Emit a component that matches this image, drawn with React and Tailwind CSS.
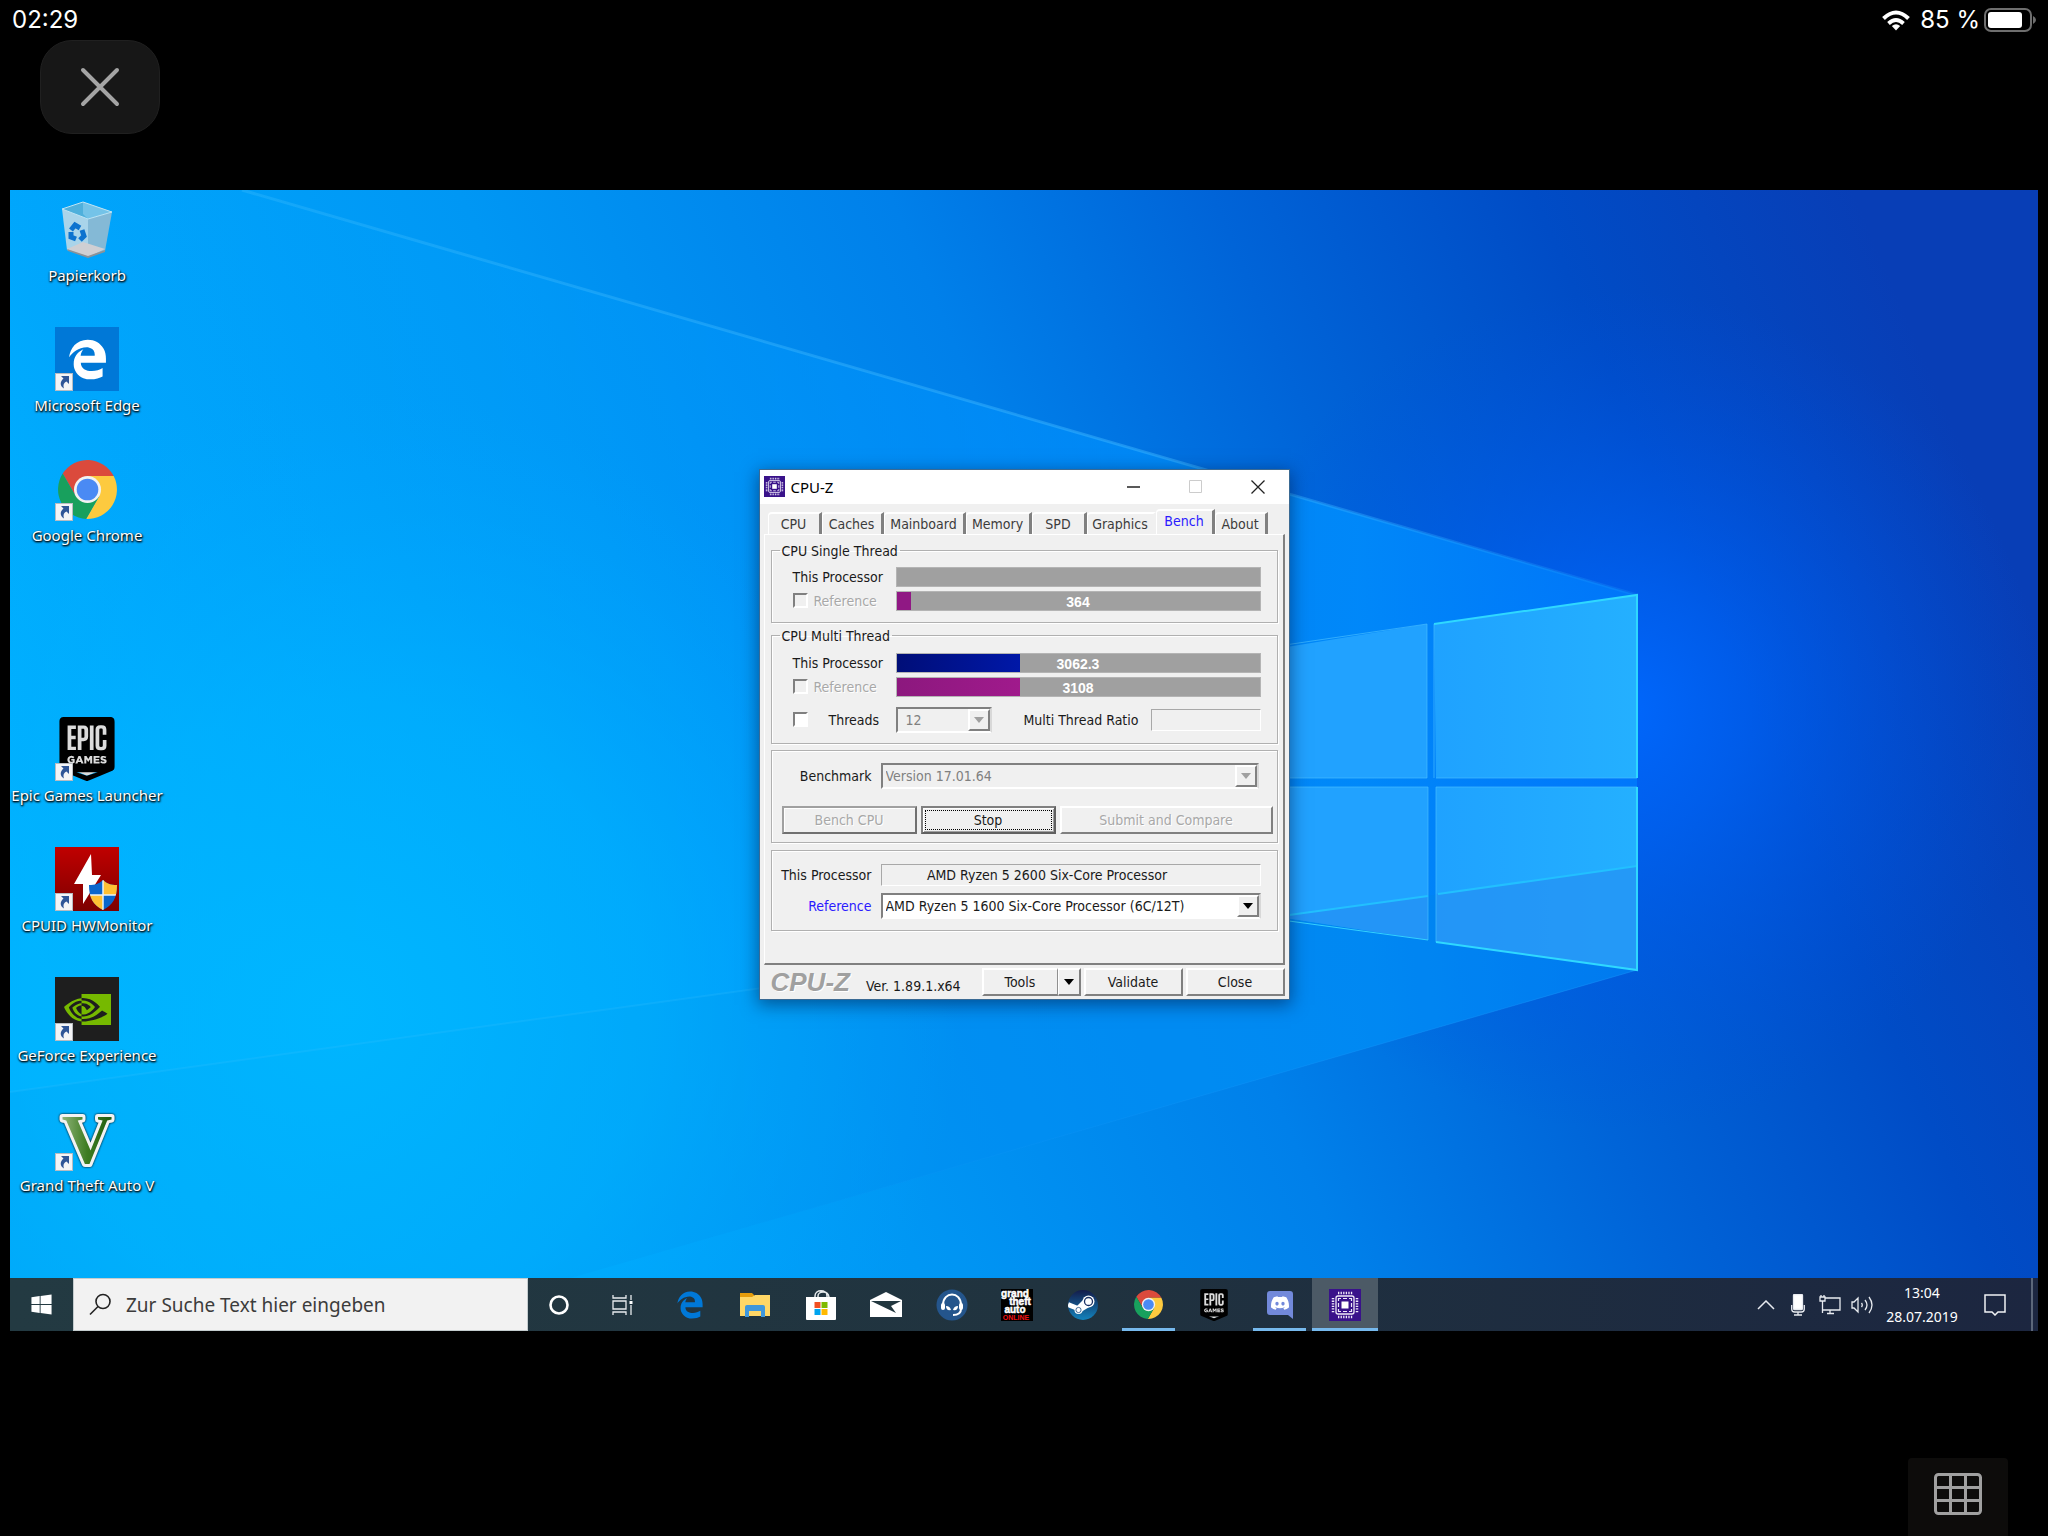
import React, { useState } from 'react';
import { FaEdgeLegacy, FaWindows } from 'react-icons/fa6';
import { SiDiscord, SiEpicgames, SiNvidia } from 'react-icons/si';

const tabs = [
  { name: 'CPU', width: 'w-[54px]' },
  { name: 'Caches', width: 'w-[62px]' },
  { name: 'Mainboard', width: 'w-[82px]' },
  { name: 'Memory', width: 'w-[66px]' },
  { name: 'SPD', width: 'w-[55px]' },
  { name: 'Graphics', width: 'w-[69px]' },
  { name: 'Bench', width: 'w-[59px]' },
  { name: 'About', width: 'w-[53px]' },
];

/* ---------- Icons ---------- */

const Chrome = ({ size }) => (
  <svg width={size} height={size} viewBox="0 0 48 48">
    <path d="M3.82 11.05A24 24 0 0 1 45.3 13H24l-9.53 16.5z" fill="#db4a3c" />
    <path d="M45.3 13a24 24 0 0 1-22.42 34.95L33.53 29.5 24 13z" fill="#fdca3f" />
    <path d="M22.88 47.95A24 24 0 0 1 3.82 11.05L14.47 29.5h19.06z" fill="#18a05d" />
    <circle cx="24" cy="24" r="11" fill="#f2f2f2" />
    <circle cx="24" cy="24" r="8.8" fill="#4a8af4" />
  </svg>
);

const Epic = ({ size }) => (
  <svg width={size} height={size} viewBox="0 0 24 24">
    <path d="M3.5 1.5h17v17L12 22l-8.500-3.500z" fill="#dcdcdc" />
    <SiEpicgames size={24} color="#000" />
  </svg>
);

const Chip = ({ size }) => (
  <svg width={size} height={size} viewBox="0 0 32 32" fill="none" stroke="#efeaf8">
    <rect width="32" height="32" fill="#39128a" stroke="none" />
    <path d="M9 4h14.200M9 28h14.200" strokeWidth="2.500" strokeDasharray="1.300 1.280" />
    <path d="M4 9v14.200M28 9v14.200" strokeWidth="2.500" strokeDasharray="1.300 1.280" />
    <rect x="7" y="7" width="18" height="18" rx="2" strokeWidth="1.300" />
    <rect x="12.500" y="12.500" width="7" height="7" fill="#fff" stroke="none" />
    <path d="M9.500 12v-2.500H12M20 9.500h2.500V12M22.500 20v2.500H20M12 22.500H9.500V20M14 9.500h4M14 22.500h4M9.500 14v4M22.500 14v4" strokeWidth="1.200" />
  </svg>
);

const RecycleBin = () => (
  <svg width="64" height="64" viewBox="0 0 64 64">
    <g transform="translate(0 2)">
      <path d="M7 10 28 3l29 10-24 7z" fill="#4fb0dc" />
      <path d="M28 3v12l5 5 24-7z" fill="#74c3e8" />
      <path d="m7 10 26 10v38l-21-7z" fill="#a9d4ea" />
      <path d="m33 20 24-7-7 39-17 6z" fill="#84b9d6" />
      <path d="m12 50 16-7 22 7-17 8z" fill="#cfcfd3" />
      <path d="m12 50 21 7 17-6v2l-17 6-20-7z" fill="#8b9298" />
      <path d="M7 10 28 3l29 10-24 7z" fill="none" stroke="#bfe4f4" />
      <g fill="none" stroke="#0d73cf" strokeWidth="5">
        <path d="m16 31 4-5 5 3" />
        <path d="m27 31 2 6-4 4" />
        <path d="m21 40-5-2v-5" />
      </g>
    </g>
  </svg>
);

const EdgeTile = () => (
  <span className="flex size-16 items-center justify-center bg-[#0078d7]">
    <FaEdgeLegacy size={41} color="#fff" />
  </span>
);

const HwMonitor = () => (
  <svg width="64" height="64" viewBox="0 0 64 64">
    <defs>
      <linearGradient id="hw" x2="0" y2="1">
        <stop stopColor="#c00000" />
        <stop offset="1" stopColor="#7d0000" />
      </linearGradient>
      <clipPath id="uac">
        <path d="M48 33c4 4 8 5 14 5 0 13-4 20-14 25-10-5-14-12-14-25 6 0 10-1 14-5z" />
      </clipPath>
    </defs>
    <rect width="64" height="64" fill="url(#hw)" />
    <path d="M36 7 19 37h9v20l18-29h-9z" fill="#fff" />
    <g clipPath="url(#uac)">
      <rect x="33" y="32" width="30" height="32" fill="#0a66cc" />
      <path d="M48 32h16v16H48zM32 48h16v16H32z" fill="#ffc033" />
      <path d="M48 32v32M33 48h30" stroke="#e8f2fa" strokeWidth="1.500" />
    </g>
  </svg>
);

const GeForce = () => (
  <span className="flex size-16 items-center justify-center bg-[#1e1e1e]">
    <SiNvidia size={47} color="#76b900" />
  </span>
);

const GtaV = () => (
  <svg width="64" height="64" viewBox="0 0 64 64" className="overflow-visible drop-shadow-[0_0_1px_#000]">
    <defs>
      <linearGradient id="gta">
        <stop stopColor="#8fb47a" />
        <stop offset="0.500" stopColor="#3e7c22" />
        <stop offset="1" stopColor="#1f5c10" />
      </linearGradient>
    </defs>
    <text
      x="32"
      y="56"
      fontFamily="Liberation Serif, serif"
      fontWeight="700"
      fontSize="70"
      textAnchor="middle"
      fill="url(#gta)"
      stroke="#f3f3f3"
      strokeWidth="6"
      strokeLinejoin="round"
      paintOrder="stroke"
    >
      V
    </text>
  </svg>
);

const ShortcutArrow = () => (
  <svg className="absolute bottom-0 left-0" width="18" height="18" viewBox="0 0 18 18">
    <rect width="18" height="18" fill="#b8bcc2" />
    <rect x="1" y="1" width="16" height="16" fill="#f4f4f6" />
    <path d="M6 3h8v8l-2.500-2.500C8.500 10 8 12 9 15.500 5 13 4.500 9 8.500 5.500z" fill="#2f5597" />
  </svg>
);

const Folder = () => (
  <svg width="30" height="26" viewBox="0 0 30 26">
    <path d="M0 1h12l2 2v4H0z" fill="#e59c0b" />
    <path d="M0 5h12l3-2h15v21H0z" fill="#ffd766" />
    <path d="M5 25V15q0-2 2-2h16q2 0 2 2v10h-4v-6H9v6z" fill="#3f97db" />
  </svg>
);

const Store = () => (
  <svg width="32" height="32" viewBox="0 0 32 32">
    <path d="M10 10V7c0-7 12-7 12 0v3M13 10V7c0-5 10-6 11 1" fill="none" stroke="#e6eaec" strokeWidth="1.500" />
    <path d="M1 8h30v22q0 1-1 1H2q-1 0-1-1z" fill="#fff" />
    <path d="M9.500 13h6v6h-6z" fill="#f25022" />
    <path d="M16.500 13h6v6h-6z" fill="#7fba00" />
    <path d="M9.500 20h6v6h-6z" fill="#00a4ef" />
    <path d="M16.500 20h6v6h-6z" fill="#ffb900" />
  </svg>
);

const Mail = () => (
  <svg width="32" height="26" viewBox="0 0 32 26">
    <path d="M0 8 16 0l16 8v17H0z" fill="#fff" />
    <path d="M1 9h30l-10 5 5 7L1 9z" fill="#22373f" />
  </svg>
);

const TeamSpeak = () => (
  <svg width="32" height="32" viewBox="0 0 32 32">
    <circle cx="16" cy="16" r="15.500" fill="#24558c" />
    <path d="M7 16C7 2 25 2 25 16" fill="none" stroke="#fff" strokeWidth="2" />
    <rect x="5" y="14" width="4" height="7" rx="2" fill="#fff" />
    <rect x="23" y="14" width="4" height="7" rx="2" fill="#fff" />
    <path d="M10 17q4 0 5 4-5 1-5-4zM22 17q-4 0-5 4 5 1 5-4z" fill="#fff" />
    <path d="M25 20c0 4-3 6-8 6" fill="none" stroke="#fff" strokeWidth="2" />
  </svg>
);

const GtaOnline = () => (
  <svg width="32" height="32" viewBox="0 0 32 32" fontFamily="Liberation Sans, sans-serif" fontWeight="700" textAnchor="middle">
    <rect width="32" height="32" fill="#000" />
    <g fill="#fff" stroke="#fff" strokeWidth="0.500" fontSize="10">
      <text x="14" y="8">grand</text>
      <text x="19" y="16">theft</text>
      <text x="14" y="24">auto</text>
    </g>
    <text x="15" y="31" fill="#f01010" fontSize="7">ONLINE</text>
  </svg>
);

const Steam = () => (
  <svg width="30" height="30" viewBox="0 0 30 30">
    <defs>
      <linearGradient id="steam" x2="0" y2="1">
        <stop stopColor="#141c4a" />
        <stop offset="1" stopColor="#1383bd" />
      </linearGradient>
      <clipPath id="disc"><circle cx="15" cy="15" r="15" /></clipPath>
    </defs>
    <g clipPath="url(#disc)">
      <rect width="30" height="30" fill="url(#steam)" />
      <path d="M0 14.500 11 19" stroke="#fff" strokeWidth="5" />
      <path d="m9 16 7-7 7 7-10 6z" fill="#fff" />
      <circle cx="10.500" cy="20" r="4" fill="#fff" />
      <circle cx="10.500" cy="20" r="2.600" fill="none" stroke="#1b4a80" strokeWidth="0.800" />
      <circle cx="20.500" cy="11.500" r="6" fill="#fff" />
      <circle cx="20.500" cy="11.500" r="4" fill="none" stroke="#1a2f62" strokeWidth="1.300" />
    </g>
  </svg>
);

const Discord = () => (
  <svg width="26" height="28" viewBox="0 0 26 28">
    <path d="M3 0h20q3 0 3 3v25l-5-4H3q-3 0-3-3V3q0-3 3-3z" fill="#7289da" />
    <svg x="4" y="3" width="18" height="18" viewBox="0 0 24 24">
      <SiDiscord size={24} color="#fff" />
    </svg>
  </svg>
);

/* ---------- Wallpaper ---------- */

// viewBox is the remote screen, 2028 x 1141, the taskbar covers its lower end
const Wallpaper = () => (
  <svg className="absolute inset-0 size-full" viewBox="0 0 2028 1141" preserveAspectRatio="xMidYMin slice" aria-hidden="true">
    <defs>
      <linearGradient id="sky" y1="0.620" x2="1" y2="0.380">
        <stop stopColor="#00b4ff" />
        <stop offset="0.150" stopColor="#00a5fc" />
        <stop offset="0.350" stopColor="#0097f4" />
        <stop offset="0.550" stopColor="#0080ea" />
        <stop offset="0.700" stopColor="#0064d8" />
        <stop offset="0.850" stopColor="#004cc6" />
        <stop offset="1" stopColor="#083eb6" />
      </linearGradient>
      <radialGradient id="cyan" gradientUnits="userSpaceOnUse" cx="330" cy="820" r="620">
        <stop stopColor="#00b8ff" stopOpacity="0.900" />
        <stop offset="0.500" stopColor="#00b4ff" stopOpacity="0.600" />
        <stop offset="1" stopColor="#00a8ff" stopOpacity="0" />
      </radialGradient>
      <radialGradient id="glow" gradientUnits="userSpaceOnUse" cx="1610" cy="520" r="420">
        <stop stopColor="#0068ff" stopOpacity="0.950" />
        <stop offset="0.300" stopColor="#0062f8" stopOpacity="0.700" />
        <stop offset="1" stopColor="#0050e0" stopOpacity="0" />
      </radialGradient>
      <linearGradient id="beam" gradientUnits="userSpaceOnUse" x1="230" x2="1627">
        <stop stopColor="#00a8ff" stopOpacity="0.100" />
        <stop offset="0.500" stopColor="#0094ff" stopOpacity="0.500" />
        <stop offset="0.800" stopColor="#008cfc" stopOpacity="0.900" />
        <stop offset="1" stopColor="#0080ff" stopOpacity="0.700" />
      </linearGradient>
      <linearGradient id="pane" x2="1">
        <stop stopColor="#1fa2ff" />
        <stop offset="1" stopColor="#24b0ff" />
      </linearGradient>
      <linearGradient id="ray" gradientUnits="userSpaceOnUse" x1="230" x2="1627">
        <stop stopColor="#4cc4ff" stopOpacity="0.250" />
        <stop offset="0.700" stopColor="#3cb4ff" stopOpacity="0.500" />
        <stop offset="1" stopColor="#20a0ff" stopOpacity="0.200" />
      </linearGradient>
      <linearGradient id="lowRay" gradientUnits="userSpaceOnUse" x1="700" x2="1627">
        <stop stopColor="#20a0ff" stopOpacity="0" />
        <stop offset="1" stopColor="#20a0ff" stopOpacity="0.350" />
      </linearGradient>
    </defs>
    <rect width="2028" height="1141" fill="url(#sky)" />
    <rect width="2028" height="1141" fill="url(#glow)" />
    <path d="M0 0h232l1395 405v375L377 1141H0z" fill="url(#beam)" />
    <path d="m0 902 1279-177 348-48v103L377 1141H0z" fill="#0088e0" fillOpacity="0.250" />
    <rect width="2028" height="1141" fill="url(#cyan)" />
    <path d="m232 0 1395 405" stroke="url(#ray)" strokeWidth="3" />
    <path d="M1627 780 560 1088" stroke="url(#lowRay)" strokeWidth="1" />
    <path d="m0 902 1279-177" stroke="#3cc4ff" strokeOpacity="0.200" strokeWidth="2" />
    <path d="M1160 588V476l257-42v154zM1160 597h258v153l-258-40z" fill="#21a2ff" />
    <path d="m1424 434 203-29v183h-201zM1426 597h201v183l-201-28z" fill="url(#pane)" />
    <path d="m1160 742 258-36v44l-258-40zM1426 704l201-28v104l-201-28z" fill="#2590f4" fillOpacity="0.700" />
    <path d="m1160 472 257-38v154h-257M1424 588V434M1426 588h201M1160 597h258v153M1426 752V597h201" fill="none" stroke="#45bcff" strokeOpacity="0.700" />
    <path d="m1279 725 139-19M1428 704l199-28" stroke="#22c0ff" strokeWidth="2" />
    <path d="m1279 731 139 19" stroke="#35d0ff" strokeWidth="1" />
    <path d="m1424 434 203-29v183M1627 597v183l-201-28" fill="none" stroke="#2fd8ff" strokeWidth="2" />
  </svg>
);

/* ---------- Desktop shortcuts ---------- */

const shortcuts = [
  { label: 'Papierkorb', icon: <RecycleBin />, link: false },
  { label: 'Microsoft Edge', icon: <EdgeTile />, link: true },
  { label: 'Google Chrome', icon: <Chrome size={59} />, link: true },
  null,
  { label: 'Epic Games Launcher', icon: <Epic size={64} />, link: true },
  { label: 'CPUID HWMonitor', icon: <HwMonitor />, link: true },
  { label: 'GeForce Experience', icon: <GeForce />, link: true },
  { label: 'Grand Theft Auto V', icon: <GtaV />, link: true },
];

const Shortcut = ({ item }) => (
  <button className="flex h-[130px] w-full flex-col items-center">
    <span className="relative flex size-16 items-center justify-center">
      {item.icon}
      {item.link && <ShortcutArrow />}
    </span>
    <span className="text-[15px] leading-7 whitespace-nowrap text-white [text-shadow:1px_1px_2px_#000,0_1px_2px_#000]">{item.label}</span>
  </button>
);

/* ---------- CPU-Z window ---------- */

const Group = ({ legend, className, children }) => (
  <fieldset className={`border border-[#b0b0b0] pl-2 shadow-[1px_1px_0_#fff,inset_1px_1px_0_#fff] ${className}`}>
    {legend && <legend className="px-[2px] leading-5">{legend}</legend>}
    {children}
  </fieldset>
);

const Bar = ({ label, value, percent, fill }) => (
  <div role="progressbar" aria-label={label} aria-valuenow={percent} className="relative h-5 border border-[#b4b4b4] bg-[#a0a0a0]">
    <div className={`h-full ${fill}`} style={{ width: `${percent}%` }} />
    <span className="absolute inset-0 text-center font-['Liberation_Sans',sans-serif] text-[14px] leading-5 font-bold text-white">{value}</span>
  </div>
);

const Check = (props) => (
  <input
    type="checkbox"
    className="size-[15px] shrink-0 appearance-none border-2 border-t-[#808080] border-r-white border-b-white border-l-[#808080] bg-white checked:bg-[#404040] disabled:bg-[#f0f0f0]"
    {...props}
  />
);

const ReferenceCheck = () => (
  <label className="flex items-center gap-[6px] text-[#a8a8a8] [text-shadow:1px_1px_0_#fff]">
    <Check disabled />
    Reference
  </label>
);

const Combo = ({ id, value, disabled, className }) => (
  <div className={`relative h-[26px] ${className}`}>
    <select
      id={id}
      disabled={disabled}
      className="block size-full appearance-none border-2 border-t-[#808080] border-r-[#d8d8d8] border-b-white border-l-[#808080] bg-white pl-[3px] opacity-100 disabled:bg-[#f0f0f0] disabled:text-[#808080]"
    >
      <option>{value}</option>
    </select>
    <span className="pointer-events-none absolute top-[2px] right-[2px] bottom-[2px] flex w-[22px] items-center justify-center border-2 border-t-white border-r-[#808080] border-b-[#808080] border-l-white bg-[#f0f0f0]">
      <svg width="10" height="6" viewBox="0 0 10 6">
        <path d="M0 0h10L5 6z" fill={disabled ? '#a0a0a0' : '#000'} />
      </svg>
    </span>
  </div>
);

const raised = 'border-2 border-t-white border-r-[#808080] border-b-[#808080] border-l-white bg-[#f0f0f0]';

function CpuZ() {
  const [tab, setTab] = useState('Bench');

  return (
    <section className="w-[529px] bg-[#f0f0f0] font-['DejaVu_Sans_Condensed','DejaVu_Sans',sans-serif] text-[14px] leading-5 text-[#1a1a1a] shadow-[0_0_0_1px_#3a6a94,0_4px_16px_2px_rgba(0,20,60,0.5)]">
      <header className="flex h-[34px] items-center bg-white pl-1 font-['Noto_Sans',sans-serif] text-[15px] text-black">
        <Chip size={21} />
        <h1 className="ml-[6px] leading-8">CPU-Z</h1>
        <div className="ml-auto flex">
          <button aria-label="Minimieren" className="flex h-[34px] w-[62px] items-center justify-center">
            <svg width="13" height="2"><path d="M0 1h13" stroke="#222" strokeWidth="1.500" /></svg>
          </button>
          <button aria-label="Maximieren" disabled className="flex h-[34px] w-[62px] items-center justify-center">
            <svg width="13" height="13"><path d="M.5.5h12v12H.5z" fill="none" stroke="#ccc" /></svg>
          </button>
          <button aria-label="Schließen" className="flex h-[34px] w-[62px] items-center justify-center">
            <svg width="14" height="14"><path d="m.5.500 13 13m0-13-13 13" stroke="#222" strokeWidth="1.300" /></svg>
          </button>
        </div>
      </header>

      <div className="px-1 pt-[5px]">
        <div role="tablist" className="flex items-end pl-1">
          {tabs.map(t => (
            <button
              key={t.name}
              role="tab"
              aria-selected={tab === t.name}
              onClick={() => setTab(t.name)}
              className={`rounded-tl-sm border-t-2 border-r-[3px] border-l border-t-white border-l-white text-[#3c3c3c] aria-selected:h-[25px] aria-selected:pb-[2px] aria-selected:text-[#2a1aff] ${t.width} h-[22px] leading-5 ${t.name === 'Graphics' ? 'border-r-transparent' : 'border-r-[#808080]'}`}
            >
              {t.name}
            </button>
          ))}
        </div>

        <div className="border-t border-r-2 border-b-2 border-l border-t-white border-r-[#808080] border-b-[#808080] border-l-white pt-[6px] pr-[5px] pb-8 pl-[6px]">
          <Group legend="CPU Single Thread" className="pr-4 pb-[11px]">
            <div className="ml-[13px] grid grid-cols-[103px_1fr] items-center gap-y-1 pt-[6px]">
              <span>This Processor</span>
              <Bar label="Single Thread" value="" percent={0} fill="bg-[#001080]" />
              <ReferenceCheck />
              <Bar label="Single Thread Reference" value="364" percent={4} fill="bg-[#901884]" />
            </div>
          </Group>

          <Group legend="CPU Multi Thread" className="mt-[3px] pr-4 pb-[10px]">
            <div className="ml-[13px] grid grid-cols-[103px_1fr] items-center gap-y-1 pt-[7px]">
              <span>This Processor</span>
              <Bar label="Multi Thread" value="3062.3" percent={34} fill="bg-linear-to-r from-[#000e78] to-[#0018a8]" />
              <ReferenceCheck />
              <Bar label="Multi Thread Reference" value="3108" percent={34} fill="bg-linear-to-r from-[#8c187e] to-[#a01a8c]" />
            </div>
            <div className="mt-[10px] ml-[13px] flex items-center">
              <Check id="threads" />
              <label htmlFor="threads" className="ml-[21px] w-[67px]">Threads</label>
              <Combo id="count" value="12" disabled className="w-24 [&>select]:pl-2" />
              <label htmlFor="ratio" className="mr-3 ml-auto">Multi Thread Ratio</label>
              <input id="ratio" readOnly className="h-[22px] w-[110px] border border-t-[#a8a8a8] border-r-white border-b-white border-l-[#a8a8a8]" />
            </div>
          </Group>

          <Group className="mt-[6px] pt-3 pr-1 pb-2">
            <div className="ml-[2px] flex items-center pr-[14px]">
              <label htmlFor="benchmark" className="mr-[9px] w-[90px] text-right">Benchmark</label>
              <Combo id="benchmark" value="Version 17.01.64" disabled className="flex-1" />
            </div>
            <div className="mt-[17px] ml-[2px] flex gap-1">
              <button disabled className="h-7 w-[135px] border-2 border-t-[#a0a0a0] border-r-[#707070] border-b-[#707070] border-l-[#a0a0a0] bg-[#f0f0f0] text-[#a8a8a8] shadow-[inset_1px_1px_0_#fff] [text-shadow:1px_1px_0_#fff]">Bench CPU</button>
              <button className="h-7 w-[135px] border-2 border-t-[#808080] border-r-[#606060] border-b-[#606060] border-l-[#808080] p-[2px] shadow-[inset_1px_1px_0_#fff,inset_-1px_-1px_0_#a0a0a0]">
                <span className="block h-5 border border-dotted border-black leading-[18px]">Stop</span>
              </button>
              <button disabled className={`h-7 flex-1 text-[#a8a8a8] [text-shadow:1px_1px_0_#fff] ${raised}`}>Submit and Compare</button>
            </div>
          </Group>

          <Group className="mt-[7px] pt-[13px] pr-4 pb-[11px]">
            <div className="grid grid-cols-[92px_1fr] items-center gap-x-[9px] gap-y-[7px]">
              <label htmlFor="processor" className="text-right whitespace-nowrap">This Processor</label>
              <input id="processor" readOnly defaultValue="AMD Ryzen 5 2600 Six-Core Processor" className="h-[22px] w-full border border-t-[#a8a8a8] border-r-white border-b-white border-l-[#a8a8a8] pr-[47px] text-center" />
              <label htmlFor="reference" className="text-right text-[#2a1aff]">Reference</label>
              <Combo id="reference" value="AMD Ryzen 5 1600 Six-Core Processor (6C/12T)" className="w-full" />
            </div>
          </Group>
        </div>

        <footer className="flex items-center pt-[3px] pb-[3px]">
          <span className="ml-[7px] font-['Liberation_Sans',sans-serif] text-[26px] leading-7 font-bold text-[#a0a0a0] italic [text-shadow:1px_1px_0_#fff]">CPU-Z</span>
          <span className="mt-2 ml-4">Ver. 1.89.1.x64</span>
          <div className="ml-auto flex gap-[3px]">
            <div className="flex">
              <button className="h-7 w-[76px] border-2 border-r border-t-white border-r-[#909090] border-b-[#808080] border-l-white">Tools</button>
              <button aria-label="Weitere Tools" className="flex h-7 w-[23px] items-center justify-center border-2 border-l border-t-white border-r-[#808080] border-b-[#808080] border-l-white">
                <svg width="10" height="6" viewBox="0 0 10 6"><path d="M0 0h10L5 6z" /></svg>
              </button>
            </div>
            <button className={`h-7 w-[99px] ${raised}`}>Validate</button>
            <button className={`h-7 w-[99px] ${raised}`}>Close</button>
          </div>
        </footer>
      </div>
    </section>
  );
}

/* ---------- Taskbar ---------- */

const apps = [
  { name: 'Edge', icon: <FaEdgeLegacy size={28} color="#0078d7" /> },
  { name: 'Explorer', icon: <Folder /> },
  { name: 'Store', icon: <Store /> },
  { name: 'Mail', icon: <Mail /> },
  { name: 'TeamSpeak', icon: <TeamSpeak /> },
  { name: 'GTA Online', icon: <GtaOnline /> },
  { name: 'Steam', icon: <Steam /> },
  { name: 'Chrome', icon: <Chrome size={29} />, running: true },
  { name: 'Epic Games', icon: <Epic size={32} /> },
  { name: 'Discord', icon: <Discord />, running: true },
  { name: 'CPU-Z', icon: <Chip size={32} />, active: true },
];

const Taskbar = () => (
  <footer className="relative flex h-[53px] bg-linear-to-r from-[#233a42] via-[#20333f] to-[#1c2640] text-white">
    <button aria-label="Start" className="flex w-[63px] items-center justify-center"><FaWindows size={23} /></button>
    <label className="flex w-[455px] items-center border border-[#c4ccce] bg-[#f2f2f2] pl-[15px]">
      <svg width="23" height="23" viewBox="0 0 23 23" fill="none" stroke="#222" strokeWidth="1.600">
        <circle cx="14" cy="8.500" r="7" />
        <path d="M9 13.500 1 21.500" />
      </svg>
      <input aria-label="Suche" placeholder="Zur Suche Text hier eingeben" className="ml-[14px] flex-1 pt-[2px] text-[19px] placeholder:text-[#3c3c3c]" />
    </label>
    <button aria-label="Cortana" className="flex w-[62px] items-center justify-center">
      <svg width="22" height="22"><circle cx="11" cy="11" r="8.500" fill="none" stroke="#fff" strokeWidth="2.600" /></svg>
    </button>
    <button aria-label="Aktive Anwendungen" className="flex w-[66px] items-center justify-center">
      <svg width="22" height="22" fill="none" stroke="#e8ecee" strokeWidth="1.300">
        <path d="M1 1v3h13V1M1 21v-3h13v3M1 7h13v8H1zM19 1v5M19 11v10" />
        <path d="M17.500 7h3v3h-3z" fill="#fff" stroke="none" />
      </svg>
    </button>
    <nav className="ml-px grid w-[721px] grid-cols-11">
      {apps.map(app => (
        <button key={app.name} aria-label={app.name} className={`relative flex items-center justify-center ${app.active ? 'bg-[#4c5a66]' : ''}`}>
          {app.icon}
          {app.running && <span className="absolute inset-x-[6px] bottom-0 h-[3px] bg-[#76b9ed]" />}
          {app.active && <span className="absolute inset-x-0 bottom-0 h-[3px] bg-[#76b9ed]" />}
        </button>
      ))}
    </nav>

    <div className="ml-auto flex items-center">
      <div className="flex items-center [&>button]:flex [&>button]:w-8 [&>button]:justify-center">
        <button aria-label="Ausgeblendete Symbole">
          <svg width="18" height="10" fill="none" stroke="#e8ebf0" strokeWidth="1.500"><path d="m1 9 8-8 8 8" /></svg>
        </button>
        <button aria-label="Mikrofon">
          <svg width="14" height="22" viewBox="0 0 14 22" fill="none" stroke="#e8ebf0" strokeWidth="1.300">
            <rect x="2.500" y="0.500" width="9" height="15" rx="1" fill="#fff" />
            <path d="M.7 11v4q0 3 3 3h6.600q3 0 3-3v-4M7 18v3M3 21h8" />
          </svg>
        </button>
        <button aria-label="Netzwerk">
          <svg width="22" height="20" viewBox="0 0 22 20" fill="none" stroke="#e8ebf0" strokeWidth="1.300">
            <path d="M6 3h15v12H3M11 15v3M8 18.500h7" />
            <path d="M1 2h5v4H1zM3.500 6v12M2 2V0M5 2V0" />
          </svg>
        </button>
        <button aria-label="Lautstärke">
          <svg width="22" height="20" viewBox="0 0 22 20" fill="none" stroke="#e8ebf0" strokeWidth="1.300">
            <path d="M1 7h2l4-4v14l-4-4H1zM10.500 8q1.500 2 0 4M14 5q4 5 0 10M18 2q6 8 0 16" />
          </svg>
        </button>
      </div>
      <time className="ml-[6px] w-[76px] text-center text-[14px] leading-6 whitespace-nowrap">13:04<br />28.07.2019</time>
      <button aria-label="Benachrichtigungen" className="ml-6 flex w-[22px]">
        <svg width="22" height="22" viewBox="0 0 22 22" fill="none" stroke="#f0f2f4" strokeWidth="1.500"><path d="M1 1h20v17h-7l-3 3-3-3H1z" /></svg>
      </button>
      <button aria-label="Desktop anzeigen" className="ml-[25px] h-[53px] w-[7px] border-l-2 border-[#5c677a]" />
    </div>
  </footer>
);

/* ---------- Tablet shell ---------- */

export default function App() {
  return (
    <div className="flex min-h-screen flex-col bg-black font-['Noto_Sans',sans-serif]">
      <header className="h-[190px] text-white">
        <div className="flex h-10 items-center px-3 font-[Inter,sans-serif] text-[24px]">
          <time>02:29</time>
          <div className="ml-auto flex items-center gap-1">
            <svg width="28" height="21" viewBox="0 0 28 21" fill="none" stroke="#fff" strokeWidth="4">
              <path d="M1.500 8.500Q14-3.500 26.500 8.500" />
              <path d="M6.500 13.500q7.500-7 15 0" strokeWidth="3.800" />
              <path d="M9.800 16q4.200-3.500 8.400 0L14 20.500z" fill="#fff" stroke="none" />
            </svg>
            <span className="ml-[6px]">85 %</span>
            <svg width="52" height="24" viewBox="0 0 52 24">
              <rect x="1" y="1" width="46" height="22" rx="6" fill="none" stroke="#6e6e6e" strokeWidth="2" />
              <rect x="4" y="4" width="34" height="16" rx="3" fill="#fff" />
              <path d="M49 8q3 1.500 3 4t-3 4z" fill="#6e6e6e" />
            </svg>
          </div>
        </div>
        <button aria-label="Verbindung trennen" className="ml-10 flex h-[94px] w-[120px] items-center justify-center rounded-[32px] border border-[#202020] bg-[#171717]">
          <svg width="40" height="40" stroke="#a4a4a4" strokeWidth="4" strokeLinecap="round"><path d="m3 3 34 34m0-34L3 37" /></svg>
        </button>
      </header>

      <main className="mx-[10px] flex aspect-[2028/1141] flex-col">
        <div className="relative grid flex-1 overflow-hidden">
          <Wallpaper />
          <div className="relative col-start-1 row-start-1 w-[154px] pt-[7px]">
            {shortcuts.map((item, i) => item ? <Shortcut key={item.label} item={item} /> : <div key={i} className="h-[130px]" />)}
          </div>
          <div className="relative col-start-1 row-start-1 place-self-center">
            <CpuZ />
          </div>
        </div>
        <Taskbar />
      </main>

      <footer className="mt-auto flex justify-end pr-10">
        <button aria-label="Tastatur" className="flex h-[78px] w-[100px] justify-center rounded-t bg-[#0d0c0b] pt-[15px]">
          <svg width="48" height="42" viewBox="0 0 48 42" fill="none" stroke="#a0a0a0" strokeWidth="3">
            <rect x="1.500" y="1.500" width="45" height="39" rx="3" />
            <path d="M2 14.500h44M2 27.500h44M16.500 2v38M31.500 2v38" />
          </svg>
        </button>
      </footer>
    </div>
  );
}
